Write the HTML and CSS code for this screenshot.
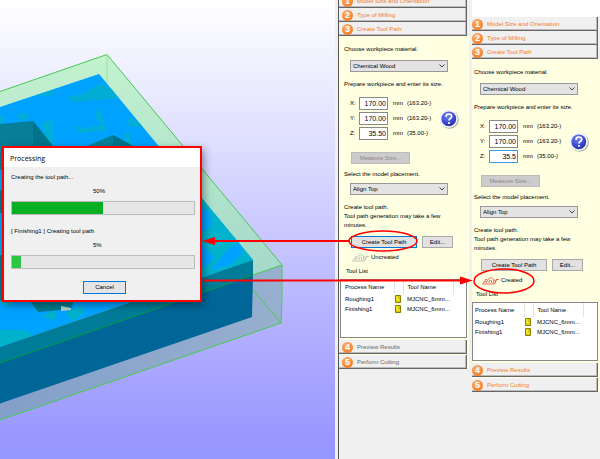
FILE: index.html
```html
<!DOCTYPE html>
<html lang="en">
<head>
<meta charset="utf-8">
<title>Create Tool Path</title>
<link rel="stylesheet" href="styles.css">
</head>
<body>
<svg class="defs" aria-hidden="true">
  <defs>
    <radialGradient id="blue" cx=".4" cy=".3" r=".8"><stop offset="0" stop-color="#7a86f0"/><stop offset=".6" stop-color="#3a48d0"/><stop offset="1" stop-color="#1c2894"/></radialGradient>
    <symbol id="path-icon" viewBox="0 0 17 9">
      <g fill="none" stroke="currentColor" stroke-width=".7">
        <path d="M2 5.500H4M0 8H12.500L14.500 3.500H17M3 3.500H5M4 7L6 3.500L8.500 1.500L11 2.500L12.500 5"/>
        <path d="M7 7Q6.500 4 8.500 4Q10 4.500 9.500 7M11 7.500L12 3.500M1 7L4 4.500M13 7L14.500 3"/>
      </g>
    </symbol>
    <symbol id="tool-icon" viewBox="0 0 6 8">
      <path d="M.5 .5H5.500V7.500H.5Z" fill="#d8c800" stroke="#8a8000"/>
      <path d="M2 1V5H4.500" fill="none" stroke="#fff860"/>
    </symbol>
    <symbol id="help-icon" viewBox="0 0 20 20">
      <circle cx="10.500" cy="10.500" r="9.300" fill="#a8a8a0"/>
      <circle cx="9.700" cy="9.700" r="9.200" fill="#f4f4f8"/>
      <circle cx="9.800" cy="9.800" r="7.400" fill="url(#blue)"/>
      <path d="M7 7.800Q7 5 9.900 5Q12.700 5 12.700 7.400Q12.700 8.700 11.200 9.600Q10 10.300 10 11.600" fill="none" stroke="#fff" stroke-width="1.700"/>
      <circle cx="10" cy="14" r="1.100" fill="#fff"/>
    </symbol>
  </defs>
</svg>
<main class="stage">
  <section class="scene" aria-label="Model view">
    <svg class="model" width="335" height="459" viewBox="0 0 335 459" aria-hidden="true">
      <defs>
        <linearGradient id="rim" x1="0" y1="0" x2="0" y2="1"><stop offset="0" stop-color="#c3f2cf"/><stop offset="1" stop-color="#98cfc8"/></linearGradient>
        <linearGradient id="side" x1="0" y1="0" x2="1" y2="0"><stop offset="0" stop-color="#829fc9"/><stop offset="1" stop-color="#98b0cf"/></linearGradient>
        <clipPath id="top"><path d="M0 107L99 74L253 260L0 347Z"/></clipPath>
      </defs>
      <path d="M0 91.500L107 54.500L282 265L0 363Z" fill="url(#rim)"/>
      <path d="M0 363L282 265L281 323L0 420Z" fill="url(#side)"/>
      <path d="M0 107L99 74L253 260L0 347Z" fill="#00a2ff"/>
      <g clip-path="url(#top)" fill="#00b2cb">
        <path d="M65 98L82 94L100 84L112 88L119 98L75 102ZM35 95L54 90L52 97Z" opacity=".8"/>
        <path d="M94 118L99 106L105 125ZM73 125L85 128L105 124L106 131L80 133ZM17 114L27 113L28 119L20 120ZM40 123L53 120L54 146H50ZM125 124L130 117L146 127L135 127ZM123 136L128 130L133 146L128 143ZM0 115H4V122L0 124Z" opacity=".75"/>
        <path d="M0 330L25 330L33 335L0 349ZM42 316L56 309L55 321ZM65 313L82 306L84 314L73 321ZM0 302L15 301L8 306Z"/>
        <path d="M198 190L255 262L198 280Z"/>
        <path d="M198 205L210 212L211 225L206 231L200 232ZM211 270L229 248L240 243L242 254L230 265ZM200 240L214 258L203 270Z" fill="#00a2ff"/>
      </g>
      <path d="M0 124L33 121L53 146L55 170H0Z" fill="#087f98"/>
      <path d="M33 121L53 146H33Z" fill="#007489"/>
      <path d="M87 146L113 135L133 146Z" fill="#087f98"/>
      <path d="M113 135L133 146H113Z" fill="#007489"/>
      <path d="M0 190H3V213H0ZM0 255H3V301H0ZM30 301L38 312L71 309L74 301Z" fill="#007b8e"/>
      <path d="M61 306L71 308L71 310L61 311Z" fill="#b0d4c8"/>
      <path d="M0 347L253 260V276L0 364Z" fill="#007b98"/>
      <path d="M0 363L253 275L252 317L0 403.500Z" fill="#006698"/>
      <g fill="none" stroke="#48c850" stroke-width="1">
        <path d="M0 91.500L107 54.500L282 265V299L281 323L0 420"/>
        <path d="M253 275L282 265M253 290L281 323"/>
        <path d="M107 55V83" stroke="#90e898"/>
        <path d="M0 363L253 275" stroke="#009d48"/>
      </g>
    </svg>
    <section class="dialog" role="dialog" aria-labelledby="dialog-title">
      <h1 id="dialog-title">Processing</h1>
      <div class="dialog-body">
        <label for="total">Creating the tool path...</label>
        <span class="percent">50%</span>
        <progress id="total" value="50" max="100"></progress>
        <label class="second" for="step">[ Finishing1 ] Creating tool path</label>
        <span class="percent">5%</span>
        <progress id="step" class="fresh" value="5" max="100"></progress>
        <button class="cancel" type="button">Cancel</button>
      </div>
    </section>
  </section>

  <section class="panel before" aria-label="Before">
    <button class="step" type="button"><i>1</i>Model Size and Orientation</button>
    <button class="step" type="button"><i>2</i>Type of Milling</button>
    <button class="step" type="button"><i>3</i>Create Tool Path</button>
    <form class="body">
      <label for="material-a">Choose workpiece material.</label>
      <select id="material-a"><option>Chemical Wood</option></select>
      <p class="prompt">Prepare workpiece and enter its size.</p>
      <div class="size">
        <div class="axes">
          <div class="axis"><label for="xa">X:</label><input id="xa" value="170.00"><span>mm</span><span>(163.20-)</span></div>
          <div class="axis"><label for="ya">Y:</label><input id="ya" value="170.00"><span>mm</span><span>(163.20-)</span></div>
          <div class="axis"><label for="za">Z:</label><input id="za" value="35.50"><span>mm</span><span>(35.00-)</span></div>
        </div>
        <button class="help" type="button" aria-label="Help"><svg width="20" height="20"><use href="#help-icon"/></svg></button>
      </div>
      <button class="push measure" type="button" disabled>Measure Size...</button>
      <label class="placement" for="place-a">Select the model placement.</label>
      <select id="place-a" class="near"><option>Align Top</option></select>
      <p class="note">Create tool path.<br>Tool path generation may take a few<br>minutes.</p>
      <div class="actions"><button class="push create focused" type="button">Create Tool Path</button><button class="push edit" type="button">Edit...</button></div>
      <p class="status"><svg width="17" height="9" aria-hidden="true"><use href="#path-icon"/></svg>Uncreated</p>
      <h2>Tool List</h2>
      <div class="list">
        <table>
          <thead><tr><th>Process Name</th><th></th><th>Tool Name</th><th></th></tr></thead>
          <tbody>
            <tr><td>Roughing1</td><td><svg width="6" height="8"><use href="#tool-icon"/></svg></td><td>MJCNC_6mm...</td><td></td></tr>
            <tr><td>Finishing1</td><td><svg width="6" height="8"><use href="#tool-icon"/></svg></td><td>MJCNC_6mm...</td><td></td></tr>
          </tbody>
        </table>
      </div>
    </form>
    <div class="later">
      <button class="step" type="button"><i>4</i>Preview Results</button>
      <button class="step" type="button"><i>5</i>Perform Cutting</button>
    </div>
  </section>

  <section class="panel after" aria-label="After">
    <button class="step" type="button"><i>1</i>Model Size and Orientation</button>
    <button class="step" type="button"><i>2</i>Type of Milling</button>
    <button class="step" type="button"><i>3</i>Create Tool Path</button>
    <form class="body">
      <label for="material-b">Choose workpiece material.</label>
      <select id="material-b"><option>Chemical Wood</option></select>
      <p class="prompt">Prepare workpiece and enter its size.</p>
      <div class="size">
        <div class="axes">
          <div class="axis"><label for="xb">X:</label><input id="xb" value="170.00"><span>mm</span><span>(163.20-)</span></div>
          <div class="axis"><label for="yb">Y:</label><input id="yb" value="170.00"><span>mm</span><span>(163.20-)</span></div>
          <div class="axis"><label for="zb">Z:</label><input id="zb" class="active" value="35.5"><span>mm</span><span>(35.00-)</span></div>
        </div>
        <button class="help" type="button" aria-label="Help"><svg width="20" height="20"><use href="#help-icon"/></svg></button>
      </div>
      <button class="push measure" type="button" disabled>Measure Size...</button>
      <label class="placement" for="place-b">Select the model placement.</label>
      <select id="place-b" class="near"><option>Align Top</option></select>
      <p class="note">Create tool path.<br>Tool path generation may take a few<br>minutes.</p>
      <div class="actions"><button class="push create" type="button">Create Tool Path</button><button class="push edit" type="button">Edit...</button></div>
      <p class="status"><svg width="17" height="9" aria-hidden="true"><use href="#path-icon"/></svg>Created</p>
      <h2>Tool List</h2>
      <div class="list">
        <table>
          <thead><tr><th>Process Name</th><th></th><th>Tool Name</th><th></th></tr></thead>
          <tbody>
            <tr><td>Roughing1</td><td><svg width="6" height="8"><use href="#tool-icon"/></svg></td><td>MJCNC_6mm...</td><td></td></tr>
            <tr><td>Finishing1</td><td><svg width="6" height="8"><use href="#tool-icon"/></svg></td><td>MJCNC_6mm...</td><td></td></tr>
          </tbody>
        </table>
      </div>
    </form>
    <div class="later">
      <button class="step" type="button"><i>4</i>Preview Results</button>
      <button class="step" type="button"><i>5</i>Perform Cutting</button>
    </div>
  </section>

  <svg class="callouts" width="600" height="459" viewBox="0 0 600 459" aria-hidden="true">
    <g fill="none" stroke="#f00" stroke-width="2">
      <path d="M349 241H213M203 280.500H462"/>
    </g>
    <g fill="none" stroke="#f00" stroke-width="1.500">
      <ellipse cx="383" cy="241" rx="34" ry="10"/>
      <ellipse cx="504" cy="281" rx="30" ry="12"/>
    </g>
    <path d="M202 241L215 237V245ZM473 280.500L460 276.500V284.500Z" fill="#f00"/>
  </svg>
</main>
</body>
</html>
```
FILE: styles.css
```css
* { box-sizing: border-box; }
body {
  margin: 0;
  font: 6px/9px "Liberation Sans", sans-serif;
  color: #000;
}
p, h1, h2 { margin: 0; font: inherit; }
button, input, select { font: inherit; color: inherit; margin: 0; padding: 0; border-radius: 0; }
svg { display: block; }
.defs { position: absolute; width: 0; height: 0; }

.stage {
  position: relative;
  display: grid;
  grid-template-columns: minmax(0, 1fr) 134px 131px;
  height: 100vh;
  overflow: hidden;
}

/* Model view */
.scene {
  position: relative;
  overflow: hidden;
  background: linear-gradient(#fff, #dcdcff 33%, #b8b6ff 66%, #9896ff 97%);
}
.dialog {
  position: absolute;
  left: 2px;
  top: 146px;
  width: 200px;
  border: 2px solid #f00;
  background: #f0f0f0;
  box-shadow: 2px 3px 8px rgba(0, 0, 0, .4);
}
.dialog h1 {
  padding: 6px 6px 4px;
  background: #fff;
  font: 7px/9px "Open Sans", sans-serif;
}
.dialog-body {
  display: flex;
  flex-direction: column;
  padding: 6px 5px 6px 7px;
}
.percent { margin: 5px 0 5px 82px; }
.second { margin-top: 12px; }
progress {
  appearance: none;
  display: block;
  width: 100%;
  height: 14px;
  border: 1px solid #bcbcbc;
  background: #e6e6e6;
}
progress::-webkit-progress-bar { background: #e6e6e6; }
progress::-webkit-progress-value { background: #06b025; }
.fresh::-webkit-progress-value { background: #2bc644; }
.cancel {
  align-self: center;
  width: 43px;
  height: 13px;
  margin: 12px 0 0 3px;
  border: 1px solid #0078d7;
  background: #e4e4e4;
}

/* Wizard panels */
.panel {
  overflow: hidden;
  border-left: 3px solid #f0f0f0;
  background: #f0f0f0;
}
.before { --inset: 5px; box-shadow: inset 1px 0 #555; padding-left: 1px; }
.before > .step:first-child { margin-top: -6px; }
.after {
  --inset: 2px;
  padding-top: 17px;
  background: linear-gradient(#fff 17px, #f0f0f0 17px);
}
.step {
  display: flex;
  align-items: center;
  width: calc(100% - 2px);
  height: 14px;
  padding-left: calc(var(--inset) - 2px);
  gap: 4px;
  border: 0;
  background: #f0f0f0;
  box-shadow: inset -1px -1px #666, inset -2px -2px #bbb;
  color: #f57c1c;
  white-space: nowrap;
}
.step i {
  width: 11px;
  height: 11px;
  border-radius: 50%;
  background: radial-gradient(circle at 40% 30%, #ffb070, #f5822c 70%);
  color: #fff;
  font: bold 9px/11px "Liberation Sans", sans-serif;
  text-align: center;
}
.body {
  display: flex;
  flex-direction: column;
  align-items: flex-start;
  padding: 9px 2px 1px var(--inset);
  background: #ffffe1;
}
select {
  appearance: none;
  width: 98px;
  height: 12px;
  margin: 6px 0 0 6px;
  padding: 0 12px 0 2px;
  border: 1px solid #999;
  background: #e3e3e3 url("data:image/svg+xml,%3Csvg xmlns='http://www.w3.org/2000/svg' width='6' height='4'%3E%3Cpath d='M.5.5L3 3L5.500.5' fill='none' stroke='%23444'/%3E%3C/svg%3E") no-repeat right 2px center;
}
.near { margin-top: 4px; }
.prompt { margin-top: 8px; }
.size { display: flex; align-items: center; gap: 1px; margin: 8px 0 0 6px; }
.axes { display: flex; flex-direction: column; gap: 2px; }
.axis {
  display: grid;
  grid-template-columns: 9px 29px 14px 36px;
  align-items: center;
}
.axis span { padding-left: 5px; }
input {
  width: 29px;
  height: 13px;
  padding-right: 1px;
  border: 1px solid #888;
  background: #fff;
  font-size: 7px;
  text-align: right;
}
.active { border-color: #3c9be8; outline: 0; }
.help { border: 0; background: none; }
.push {
  height: 12px;
  border: 1px solid #aaa;
  background: #e1e1e1;
}
.measure { width: 59px; margin: 12px 0 0 7px; }
.measure:disabled { background: #ccc; border-color: #bbb; color: #888; }
.placement { margin-top: 6px; }
.note { margin-top: 8px; }
.actions { display: flex; gap: 5px; margin: 6px 0 0 7px; }
.create { width: 66px; }
.edit { width: 31px; }
.focused { border-color: #0078d7; }
.status { display: flex; align-items: center; gap: 2px; margin: 5px 0 0 8px; }
.before .status svg { color: #aaa; }
.after .status svg { color: #e43a2c; }
h2 { margin: 5px 0 0 2px; }
.list {
  align-self: stretch;
  height: 59px;
  margin: 3px 0 0 calc(1px - var(--inset));
  border: 1px solid #888;
  background: #fff;
}
.after .list { margin-left: calc(0px - var(--inset)); }
table { width: 112px; border-collapse: collapse; table-layout: fixed; }
.after table { width: 110px; }
th, td { height: 10px; padding: 0; font-weight: normal; text-align: left; white-space: nowrap; }
th { height: 14px; border-right: 1px solid #e2e2e2; }
th:nth-child(1) { width: 53px; }
.after th:nth-child(1) { width: 51px; }
th:nth-child(2) { width: 9px; }
th:nth-child(3) { width: 50px; }
th:nth-child(4) { width: 0; border: 0; }
th:nth-child(1), td:nth-child(1) { padding-left: 4px; }
.after th:nth-child(1), .after td:nth-child(1) { padding-left: 2px; }
th:nth-child(3), td:nth-child(3) { padding-left: 4px; }
td:nth-child(2) { padding-left: 1px; }
.later { display: flex; flex-direction: column; gap: 1px; padding-top: 1px; background: #ffffe1; }
.before .later .step { color: #666; }

.callouts { position: absolute; top: 0; right: 0; pointer-events: none; }
```
